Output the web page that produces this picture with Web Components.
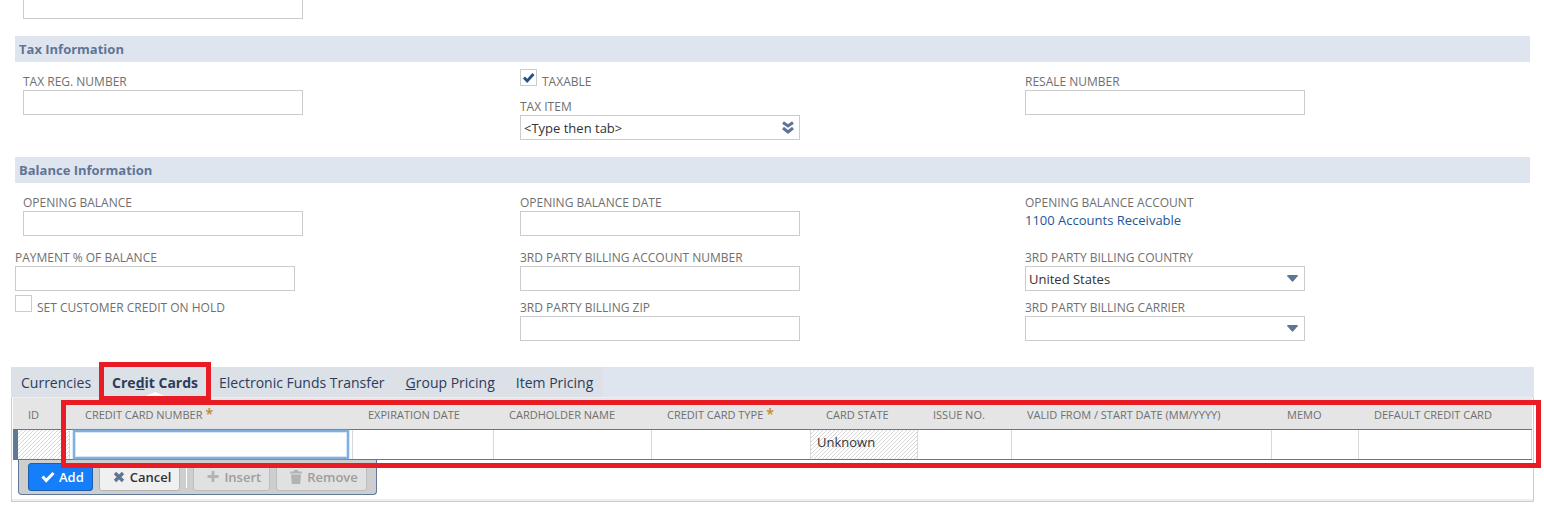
<!DOCTYPE html>
<html lang="en">
<head>
<meta charset="utf-8">
<title>Customer</title>
<style>
body { margin: 0; background: #fff; font-family: "Open Sans", "Noto Sans", sans-serif; font-size: 13px; color: #333; }
</style>
</head>
<body>
<customer-page></customer-page>
<script>
const define = (name, html, setup) => {
  const template = document.createElement('template');
  template.innerHTML = html;
  customElements.define(name, class extends HTMLElement {
    constructor() {
      super();
      this.attachShadow({ mode: 'open' }).append(template.content.cloneNode(true));
    }
    connectedCallback() { if (setup) setup(this, this.shadowRoot); }
  });
};
const setLabel = (host, root) => { root.querySelector('label').textContent = host.getAttribute('label'); };

define('form-section', `
<style>
:host { display: block; margin: 17px 14px 0 15px; }
h2 { margin: 0; padding: 0 4px; background: #dfe5ef; color: #5f7596; font-size: 13px; line-height: 26px; font-weight: 700; }
</style>
<h2></h2><slot></slot>`, (h, r) => { r.querySelector('h2').textContent = h.getAttribute('heading'); });

define('form-row', `
<style>
:host { display: grid; grid-template-columns: repeat(3, 1fr); padding-top: 7px; }
:host([continued]) { padding-top: 9px; }
</style><slot></slot>`);

define('form-column', `
<style>:host { display: flex; flex-direction: column; gap: 4px; align-items: flex-start; }</style><slot></slot>`);

const fieldCss = `
:host { display: block; box-sizing: border-box; width: 280px; padding-top: 5px; }
:host([indent]) { margin-left: 8px; }
label, .label { display: block; font-size: 12px; line-height: 16px; color: #6f6f6f; white-space: nowrap; }
.box { position: relative; }
input, select { display: block; box-sizing: border-box; width: 100%; height: 25px; margin: 0; padding: 0 3px; border: 1px solid #ccc; border-radius: 0; background: #fff; color: #333; font: inherit; outline: 0; appearance: none; }
button { position: absolute; top: 1px; right: 1px; width: 23px; height: 23px; padding: 0; border: 0; background: none; }
svg { display: block; }
.arrow { position: absolute; top: 8px; right: 6px; pointer-events: none; }
a { display: block; line-height: 18px; height: 25px; color: #255599; text-decoration: none; white-space: nowrap; }`;

define('text-field', `<style>${fieldCss}</style><label for="f"></label><input id="f" type="text">`, setLabel);

define('lookup-field', `<style>${fieldCss}</style><label for="f"></label>
<div class="box"><input id="f" type="text"><button type="button" aria-label="Open list">
<svg width="23" height="23" viewBox="0 0 23 23" fill="none" stroke="#5f7596" stroke-width="3"><path d="M7 6.500l5 3.500 5-3.500M7 12l5 4 5-4"/></svg></button></div>`,
(h, r) => { setLabel(h, r); r.querySelector('input').value = h.getAttribute('value'); });

define('select-field', `<style>${fieldCss}</style><label for="f"></label>
<div class="box"><select id="f"><option></option></select>
<svg class="arrow" width="13" height="9" viewBox="0 0 13 9"><path d="M2 1h9q1.500 0 .600 1.300L7.300 7.300q-.8.900-1.600 0L1.400 2.300Q.5 1 2 1z" fill="#5f7596"/></svg></div>`,
(h, r) => { setLabel(h, r); r.querySelector('option').textContent = h.getAttribute('value') || ''; });

define('link-field', `<style>${fieldCss}</style><span class="label"></span><a href="#account"><slot></slot></a>`,
(h, r) => { r.querySelector('.label').textContent = h.getAttribute('label'); });

define('check-field', `
<style>
:host { display: flex; align-items: flex-start; gap: 5px; height: 21px; }
input { appearance: none; box-sizing: border-box; width: 17px; height: 17px; margin: 0; border: 1px solid #ccc; background: #fff; display: grid; }
input:checked { background: #fff url("data:image/svg+xml,%3Csvg xmlns='http://www.w3.org/2000/svg' viewBox='0 0 15 15'%3E%3Cpath d='M3 7.500l3.200 3.500L12.500 4' fill='none' stroke='%23255085' stroke-width='2.800'/%3E%3C/svg%3E"); }
label { font-size: 12px; line-height: 16px; padding-top: 5px; color: #6f6f6f; white-space: nowrap; }
</style><input id="f" type="checkbox"><label for="f"></label>`,
(h, r) => { setLabel(h, r); r.querySelector('input').checked = h.hasAttribute('checked'); });

/* Red outline laid over the area that needs attention. */
define('callout-frame', `
<style>:host { position: absolute; box-sizing: border-box; z-index: 2; border: 5px solid #e81c24; pointer-events: none; }</style>`);

define('tab-bar', `
<style>
:host { display: block; background: #dfe5ef; }
nav { display: flex; gap: 1px; width: fit-content; background: #dce0e7; }
</style><nav><slot></slot></nav>`);

define('tab-item', `
<style>
:host { display: block; position: relative; }
a { display: block; padding: 0 10px; font-size: 14px; line-height: 30px; height: 30px; padding-top: 1px; box-sizing: border-box; color: #2b3d5b; text-decoration: none; white-space: nowrap; }
:host([active]) a { font-weight: 700; }
svg { display: none; position: absolute; bottom: 0; left: calc(50% - 12px); }
:host([active]) svg { display: block; }
callout-frame { display: none; inset: -5px -3px -4px -3px; }
:host([active]) callout-frame { display: block; }
</style>
<a href="#tab"><slot></slot></a>
<svg width="24" height="5" viewBox="0 0 24 5"><path d="M0 5L12 0l12 5z" fill="#fff"/></svg>
<callout-frame></callout-frame>`);

define('action-button', `
<style>
:host { display: block; }
button { display: flex; align-items: center; justify-content: center; gap: 4px; box-sizing: border-box; height: 28px; padding: 0 8px 0 12px; border: 1px solid #b5b5b5; border-radius: 3px; background: #f0f0f0; color: #333; font: 600 13px/26px "Open Sans", sans-serif; white-space: nowrap; }
:host([primary]) button { background: #157efb; border-color: #1c5fae; color: #fff; }
button:disabled { background: #e1e1e1; border-color: #bdbdbd; color: #9d9d9d; }
svg { display: block; }
</style>
<button type="button"><svg width="14" height="14" viewBox="0 0 14 14"></svg><slot></slot></button>`,
(h, r) => {
  const icons = {
    check: '<path d="M1.500 6.500l3.700 4L12.500 3" fill="none" stroke="#fff" stroke-width="3"/>',
    cross: '<path d="M3 3l8 8M11 3l-8 8" fill="none" stroke="#5f7596" stroke-width="3.400"/>',
    plus: '<path d="M7 1v11M1.500 6.500h11" fill="none" stroke="#b3b3b3" stroke-width="2.800"/>',
    trash: '<path d="M1 1.500h3.500L5 0h4l.5 1.500H13v2H1zM2 4.500h10L11.200 14H2.800z" fill="#b3b3b3"/>'
  };
  r.querySelector('svg').innerHTML = icons[h.getAttribute('icon')];
  r.querySelector('button').disabled = h.hasAttribute('disabled');
});

define('line-toolbar', `
<style>
:host { display: flex; align-items: center; gap: 6px; box-sizing: border-box; width: fit-content; height: 35px; margin-left: 5px; padding: 0 9px; background: #cecece; border: 1px solid #607799; border-top: 0; border-radius: 0 0 4px 4px; }
i { width: 1px; height: 22px; background: #fff; }
</style>
<action-button primary icon="check">Add</action-button>
<action-button icon="cross">Cancel</action-button>
<i></i>
<action-button disabled icon="plus">Insert</action-button>
<action-button disabled icon="trash">Remove</action-button>`);

define('card-table', `
<style>
:host { display: block; position: relative; box-sizing: border-box; border: 1px solid #ccc; border-top-color: #eee; padding: 0 1px 4px; box-shadow: inset 0 -2px #eee; }
table { width: 100%; table-layout: fixed; border-collapse: separate; border-spacing: 0; }
th { height: 31px; box-sizing: border-box; padding: 2px 0 0 15px; background: #e5e5e5; color: #6f6f6f; font-size: 11px; line-height: 16px; font-weight: 400; text-align: left; white-space: nowrap; }
th span { color: #c8862a; font-size: 14px; font-weight: 600; line-height: 12px; margin-left: 3px; }
td { height: 31px; box-sizing: border-box; padding: 0 6px; border: solid #607799; border-width: 1px 0; box-shadow: inset -1px 0 #d9d9d9; vertical-align: top; line-height: 24px; }
td:first-child { border-left-width: 5px; }
td.off { background: linear-gradient(135deg, #d6d6d6 10%, #fff 10%, #fff 40%, #d6d6d6 40%, #d6d6d6 60%, #fff 60%, #fff 90%, #d6d6d6 90%) 0 0 / 4px 4px; }
td.edit { padding: 0 4px 0 3px; }
input { display: block; box-sizing: border-box; width: 100%; height: 29px; padding: 0 4px; border: 2px solid #82b0dd; outline: 0; background: #fff; font: inherit; box-shadow: inset 0 0 0 1px #d5e6f6, 0 0 2px #8fbce8; }
.foot { height: 37px; }
callout-frame { inset: 2px -8px 33px 49px; }
</style>
<table>
<colgroup><col style="width:57px"><col style="width:283px"><col style="width:141px"><col style="width:158px"><col style="width:159px"><col style="width:107px"><col style="width:94px"><col style="width:260px"><col style="width:87px"><col></colgroup>
<thead><tr><th>ID</th><th>CREDIT CARD NUMBER<span>*</span></th><th>EXPIRATION DATE</th><th>CARDHOLDER NAME</th><th>CREDIT CARD TYPE<span>*</span></th><th>CARD STATE</th><th>ISSUE NO.</th><th>VALID FROM / START DATE (MM/YYYY)</th><th>MEMO</th><th>DEFAULT CREDIT CARD</th></tr></thead>
<tbody><tr><td class="off"></td><td class="edit"><input type="text" aria-label="Credit card number"></td><td></td><td></td><td></td><td class="off">Unknown</td><td></td><td></td><td></td><td></td></tr></tbody>
</table>
<div class="foot"><line-toolbar></line-toolbar></div>
<callout-frame></callout-frame>`);

define('customer-page', `
<style>
:host { display: block; }
.clipped { box-sizing: border-box; display: block; width: 280px; height: 19px; margin: 0 0 0 23px; border: 1px solid #ccc; border-top: 0; padding: 0 3px; font: inherit; }
.lists { margin: 26px 10px 0 11px; }
</style>
<input class="clipped" type="text" aria-label="Previous field">
<form-section heading="Tax Information">
  <form-row>
    <form-column><text-field indent label="TAX REG. NUMBER"></text-field></form-column>
    <form-column><check-field checked label="TAXABLE"></check-field><lookup-field label="TAX ITEM" value="&lt;Type then tab&gt;"></lookup-field></form-column>
    <form-column><text-field label="RESALE NUMBER"></text-field></form-column>
  </form-row>
</form-section>
<form-section heading="Balance Information">
  <form-row>
    <form-column><text-field indent label="OPENING BALANCE"></text-field></form-column>
    <form-column><text-field label="OPENING BALANCE DATE"></text-field></form-column>
    <form-column><link-field label="OPENING BALANCE ACCOUNT">1100 Accounts Receivable</link-field></form-column>
  </form-row>
  <form-row continued>
    <form-column><text-field label="PAYMENT % OF BALANCE"></text-field><check-field label="SET CUSTOMER CREDIT ON HOLD"></check-field></form-column>
    <form-column><text-field label="3RD PARTY BILLING ACCOUNT NUMBER"></text-field><text-field label="3RD PARTY BILLING ZIP"></text-field></form-column>
    <form-column><select-field label="3RD PARTY BILLING COUNTRY" value="United States"></select-field><select-field label="3RD PARTY BILLING CARRIER"></select-field></form-column>
  </form-row>
</form-section>
<div class="lists">
  <tab-bar>
    <tab-item>Currencies</tab-item>
    <tab-item active>Cre<u>d</u>it Cards</tab-item>
    <tab-item>Electronic Funds Transfer</tab-item>
    <tab-item><u>G</u>roup Pricing</tab-item>
    <tab-item>Item Pricing</tab-item>
  </tab-bar>
  <card-table></card-table>
</div>`);
</script>
</body>
</html>
